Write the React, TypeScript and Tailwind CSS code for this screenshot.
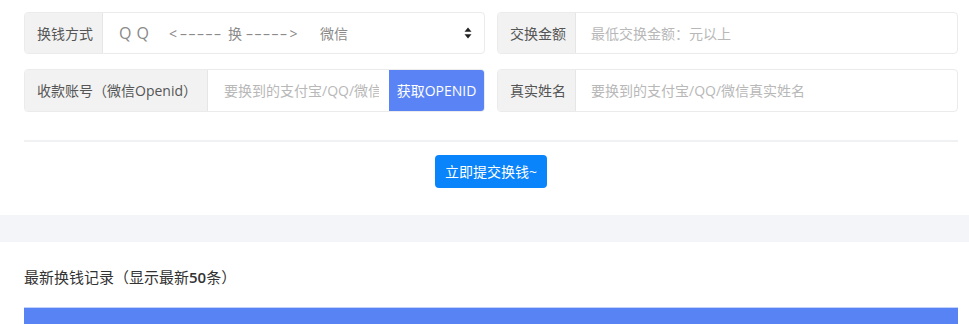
import React from "react";

const font = { fontFamily: '"Open Sans", "Noto Sans CJK SC", sans-serif' };

function Label({ children, w }: { children: React.ReactNode; w: string }) {
  return (
    <div className={`${w} shrink-0 h-full flex items-center pl-3 bg-[#f2f2f2] text-[14px] text-[#555] border-r border-[#e6e6e6] whitespace-nowrap`}>
      {children}
    </div>
  );
}

export default function App() {
  return (
    <div className="w-[969px] h-[324px] overflow-hidden bg-white" style={font}>
      <div className="pl-6 pr-[11px] pt-3">
        <div className="grid grid-cols-[461px_461px] gap-x-3 gap-y-[15px]">
          {/* 换钱方式 */}
          <div className="h-[42px] flex border border-[#ebebeb] rounded-[4px] overflow-hidden">
            <Label w="w-[78px]">换钱方式</Label>
            <div className="flex-1 flex items-center text-[14px] text-[#8a8a8a] pl-[16px] pr-[12px]">
              <span className="text-[16px] tracking-[5px] w-[50px]">QQ</span>
              <span className="w-[59px] flex items-center">
                <span className="mr-[3px]">&lt;</span>
                <span className="tracking-[1.5px]">–––––</span>
              </span>
              <span className="w-[18px]">换</span>
              <span className="w-[74px] flex items-center">
                <span className="tracking-[1.5px]">–––––</span>
                <span className="ml-[1px]">&gt;</span>
              </span>
              <span>微信</span>
              <div className="flex-1" />
              <svg width="8" height="12" viewBox="0 0 8 12">
                <path d="M4 0.5 L7.5 4.8 L0.5 4.8 Z" fill="#222" />
                <path d="M4 11.5 L7.5 7.2 L0.5 7.2 Z" fill="#222" />
              </svg>
            </div>
          </div>
          {/* 交换金额 */}
          <div className="h-[42px] flex border border-[#ebebeb] rounded-[4px] overflow-hidden">
            <Label w="w-[78px]">交换金额</Label>
            <input
              className="flex-1 min-w-0 pl-[15px] text-[14px] outline-none placeholder:text-[#b8b8b8]"
              placeholder="最低交换金额：元以上"
            />
          </div>
          {/* 收款账号 */}
          <div className="h-[43px] flex border border-[#ebebeb] rounded-[4px] overflow-hidden">
            <Label w="w-[183px]">收款账号（微信Openid）</Label>
            <input
              className="w-[181px] min-w-0 pl-[16px] pr-[10px] text-[14px] outline-none placeholder:text-[#b8b8b8]"
              placeholder="要换到的支付宝/QQ/微信账号"
            />
            <button className="flex-1 bg-[#5a84f6] text-white text-[14px] flex items-center justify-center whitespace-nowrap">
              获取OPENID
            </button>
          </div>
          {/* 真实姓名 */}
          <div className="h-[43px] flex border border-[#ebebeb] rounded-[4px] overflow-hidden">
            <Label w="w-[78px]">真实姓名</Label>
            <input
              className="flex-1 min-w-0 pl-[15px] text-[14px] outline-none placeholder:text-[#b8b8b8]"
              placeholder="要换到的支付宝/QQ/微信真实姓名"
            />
          </div>
        </div>
        <div className="mt-[28px] h-[2px] bg-[#f0f1f3]" />
        <div className="flex justify-center pt-[13px]">
          <button className="w-[112px] h-[33px] rounded-[4px] bg-[#0a84fb] text-white text-[14px]">
            立即提交换钱~
          </button>
        </div>
      </div>
      <div className="mt-[27px] h-[27px] bg-[#f3f5f9]" />
      <div className="pl-6 pr-[11px]">
        <div className="mt-[24px] text-[15px] leading-[22px] text-[#333]">
          最新换钱记录（显示最新<span className="font-semibold">50</span>条）
        </div>
        <div className="mt-[19px] h-[40px] bg-[#5783f5] border-t border-[#c3d2fb] flex text-[14px] text-[#dbe4fd] pt-[13px]">
          <div className="w-[158px] pl-[22px]">交换账号</div>
          <div className="w-[161px]">收款账号</div>
          <div className="w-[157px]">交换金额</div>
          <div className="w-[161px]">真实姓名</div>
          <div className="w-[164px]">交换状态</div>
          <div className="flex-1">交换时间</div>
        </div>
      </div>
    </div>
  );
}
